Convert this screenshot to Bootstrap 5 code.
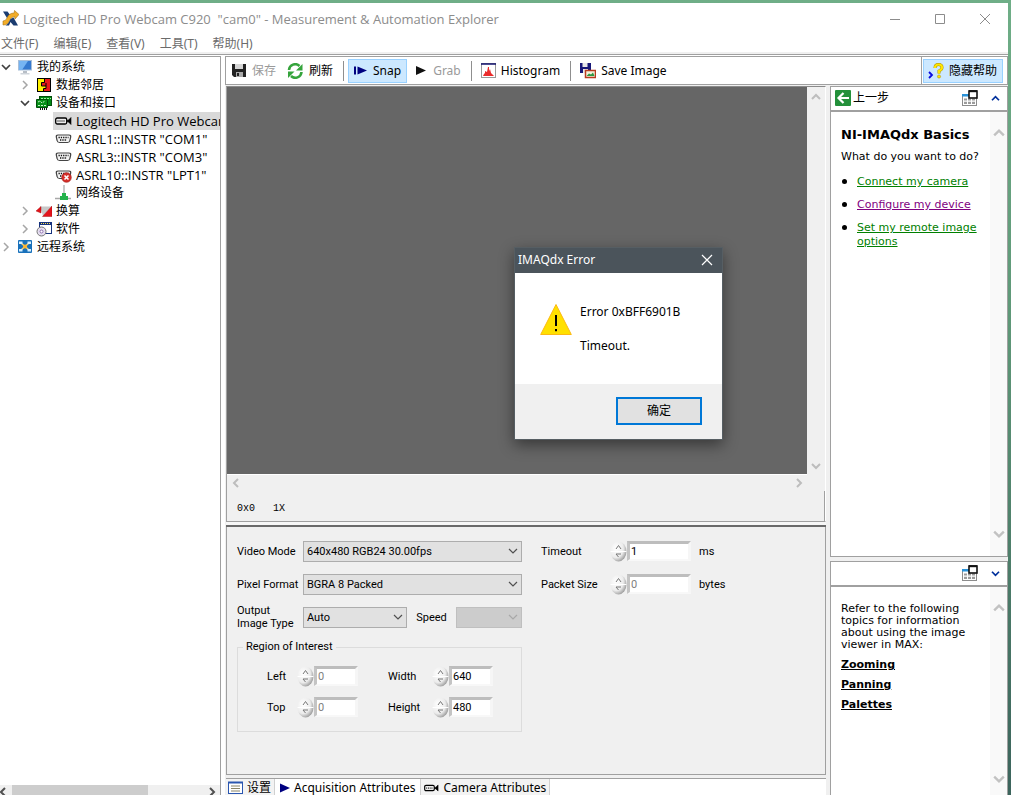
<!DOCTYPE html>
<html lang="zh-CN">
<head>
<meta charset="utf-8">
<meta name="viewport" content="width=device-width, initial-scale=1">
<title>Measurement &amp; Automation Explorer</title>
<link href="https://cdn.jsdelivr.net/npm/bootstrap@5.3.0/dist/css/bootstrap.min.css" rel="stylesheet">
<style>
:root { --line: #a0a0a0; --face: #f0f0f0; }
body { font: 12px/18px "Noto Sans", "Noto Sans CJK SC", sans-serif; color: #000; background: linear-gradient(#6fae87, #5f9878 40%, #3c645c); overflow: hidden; padding: 3px 3px 0 0; }
svg { display: block; flex: none; }
button { font: inherit; color: inherit; }
.app-window { background: var(--face); height: 100%; }
.title-bar { height: 31px; color: #8c8c8c; background: #fff; padding: 0 17px 0 2px; }
.title-text { font-family: "Open Sans", sans-serif; font-size: 13px; white-space: pre; }
.win-btn { background: none; border: 0; padding: 0; width: 12px; }
.menu-bar { height: 18px; background: #fff; gap: 15px; padding: 1px 0 0 1px; }
.menu-bar a { color: #6b6b6b; text-decoration: none; line-height: 17px; }
.menu-rule { height: 3px; border-bottom: 1px solid var(--line); }
.main-area { background: #fff; border-top: 1px solid #fff; }
.tree-pane { width: 221px; border-top: 1px solid var(--line); border-right: 1px solid var(--line); background: #fff; padding-top: 1px; }
.tree-row { height: 18px; gap: 4px; white-space: nowrap; overflow: hidden; }
.tree-row .twist { width: 12px; margin-right: 1px; }
.lvl-1 { padding-left: 19px; }
.lvl-2 { margin-left: 53px; padding-left: 2px; }
.latin { font-family: "Open Sans", sans-serif; font-size: 13px; }
.is-current { background: #d9d9d9; }
.scroll-x { height: 10px; background: var(--face); overflow: hidden; }
.thumb { width: 136px; background: #cdcdcd; }
.work-pane { background: var(--face); margin-left: 4px; border-top: 1px solid var(--line); }
.tools { height: 28px; background: #fff; border: 1px solid var(--line); border-top: 0; font-size: 12px; }
.tool { background: none; border: 1px solid transparent; height: 24px; display: flex; align-items: center; gap: 5px; padding: 0 5px 0 4px; white-space: nowrap; }
.tool.is-on { background: #cce8ff; border-color: #99d1ff; }
.tool:disabled { color: #9a9a9a; }
.tool-sep { width: 1px; height: 20px; background: #8f8f8f; }
.tools-end { border-left: 1px solid var(--line); padding: 0 4px 0 1px; }
.center-pane { padding: 1px 0 0 1px; }
.viewer { border: 1px solid var(--line); border-top-color: #8b8b8b; border-right-color: #fff; position: relative; }
.image-canvas { background: #666; border-bottom: 1px solid #fff; }
.scroll-y { width: 18px; padding: 6px 0 5px; background: var(--face); }
.image-scroll { height: 16px; padding: 0 22px 0 5px; }
.status-row { font-family: "Liberation Mono", monospace; font-size: 10px; height: 30px; padding: 6px 0 0 10px; gap: 18px; border-right: 1px solid var(--line); }
.splitter { height: 5px; background: #f7f7f7; border-bottom: 2px solid #6a6a6a; }
.settings { font: 11px/13px Roboto, sans-serif; min-height: 248px; border: 1px solid var(--line); border-top: 0; padding: 13px 11px 0 10px; }
.form-cols { gap: 19px; }
.col-left { width: 285px; }
.line-row { display: flex; align-items: center; height: 22px; white-space: nowrap; }
.field-name { width: 66px; flex: none; }
.side-name { width: 69px; }
.combo { --bs-form-select-bg-img: url("data:image/svg+xml,%3csvg xmlns='http://www.w3.org/2000/svg' viewBox='0 0 10 10'%3e%3cpath d='M1 3l4 4 4-4' fill='none' stroke='%23505050' stroke-width='1.2'/%3e%3c/svg%3e"); font: inherit; color: #000; background-color: #e1e1e1; border: 1px solid #adadad; border-radius: 0; height: 21px; padding: 0 18px 0 3px; background-position: right 3px center; background-size: 10px 10px; }
.combo:disabled { --bs-form-select-bg-img: url("data:image/svg+xml,%3csvg xmlns='http://www.w3.org/2000/svg' viewBox='0 0 10 10'%3e%3cpath d='M1 3l4 4 4-4' fill='none' stroke='%23a8a8a8' stroke-width='1.2'/%3e%3c/svg%3e"); background-color: #ccc; border-color: #bfbfbf; opacity: 1; }
.combo-auto { width: 104px; }
.combo-speed { width: 66px; }
.num { width: 44px; height: 20px; font: inherit; border-style: solid; border-width: 3px 3px 2px 3px; border-color: #bdbdbd #f6f6f6 #f8f8f8 #c4c4c4; background: #fff; padding: 0 0 0 1px; border-radius: 0; outline: 0; color: #000; }
.num:disabled { color: #808080; background: #fff; }
.num-wide { width: 64px; }
.roi { border: 1px solid #dcdcdc; padding: 0 29px 13px; margin-top: 12px; }
.roi legend { font: inherit; width: auto; float: none; margin: 0 0 12px -24px; padding: 0 3px; line-height: 14px; }
.roi-grid { display: grid; grid-template-columns: 30px 91px 44px auto; row-gap: 10px; align-items: center; }
.tab-strip { height: 17px; background: #fff; border-top: 1px solid var(--line); margin-top: 3px; }
.tab-strip button { background: none; border: 0; border-right: 1px solid #d0d0d0; padding: 2px 3px 0 2px; height: 16px; line-height: 14px; display: flex; align-items: center; gap: 3px; white-space: nowrap; }
.tab-strip .tab-on { background: #fff; padding-right: 5px; }
.tab-strip .tab-off { background: #f3f3f3; }
.help-pane { width: 178px; margin: 1px 0 0 4px; gap: 4px; }
.help-box { border: 1px solid var(--line); background: #fff; }
.help-main { height: 471px; }
.help-head { height: 25px; border-bottom: 2px solid var(--line); padding: 0 7px 1px 4px; gap: 13px; }
.help-head button { background: none; border: 0; padding: 0; display: flex; align-items: center; gap: 2px; }
.help-head .fold { color: #00309c; }
.help-text { font: 11px/12px "DejaVu Sans", sans-serif; padding: 0 0 0 10px; }
.help-text h1 { font-size: 13px; font-weight: 700; line-height: 16px; margin: 15px 0 8px; white-space: nowrap; }
.help-text p { margin: 0; white-space: nowrap; }
.help-text ul { list-style: none; padding: 0; margin: 12px 0 0; }
.help-text li { position: relative; padding-left: 16px; line-height: 14px; margin-bottom: 9px; white-space: nowrap; }
.help-text li::before { content: ""; position: absolute; left: 1px; top: 4px; width: 5px; height: 5px; border-radius: 50%; background: #000; }
.help-text li a { color: #008000; }
.help-text li a.seen { color: #800080; }
.topic { color: #000; font-weight: 700; display: block; margin-bottom: 8px; }
.lane { width: 17px; background: #f9f9f9; padding: 16px 0 17px; color: #c2c2c2; }
.lane-low { padding-bottom: 11px; }
.faint { color: #bdbdbd; }
.error-box { position: absolute; left: 287px; top: 160px; width: 209px; border: 1px solid #565e63; background: #fff; box-shadow: 0 5px 14px rgba(0,0,0,.45); font-size: 12px; }
.error-title { height: 25px; background: #4b545b; color: #fff; padding: 0 9px 2px 3px; }
.error-body { height: 111px; padding: 30px 0 0 25px; gap: 8px; line-height: 17px; }
.error-foot { height: 55px; background: var(--face); padding: 0 20px 2px; }
.ok-btn { width: 86px; height: 28px; border: 2px solid #0078d7; background: #e1e1e1; padding: 0; }
</style>
</head>
<body class="vh-100">
<svg class="position-absolute" width="0" height="0" aria-hidden="true">
  <defs><radialGradient id="knob" cx=".35" cy=".35" r=".75"><stop offset="0" stop-color="#fff"/><stop offset=".6" stop-color="#ececec"/><stop offset="1" stop-color="#8c8c8c"/></radialGradient></defs>
  <symbol id="open" viewBox="0 0 12 12"><path d="M2 4l4 4 4-4" fill="none" stroke="#404040" stroke-width="1.7"/></symbol>
  <symbol id="closed" viewBox="0 0 12 12"><path d="M4 2l4 4-4 4" fill="none" stroke="#a6a6a6" stroke-width="1.500"/></symbol>
  <symbol id="up" viewBox="0 0 10 8"><path d="M1 6l4-4 4 4" fill="none" stroke="currentColor" stroke-width="2"/></symbol>
  <symbol id="down" viewBox="0 0 10 8"><path d="M1 2l4 4 4-4" fill="none" stroke="currentColor" stroke-width="2"/></symbol>
  <symbol id="left" viewBox="0 0 8 10"><path d="M6 1L2 5l4 4" fill="none" stroke="currentColor" stroke-width="2"/></symbol>
  <symbol id="right" viewBox="0 0 8 10"><path d="M2 1l4 4-4 4" fill="none" stroke="currentColor" stroke-width="2"/></symbol>
  <symbol id="camera" viewBox="0 0 17 16"><rect x=".7" y="5" width="11" height="6" rx="1.500" fill="#ececec" stroke="#000" stroke-width="1.300"/><path d="M2.500 8h7" stroke="#555" stroke-width="2" stroke-dasharray="1 1"/><path d="M12 7.500l1.500-.5 2.500-2.500v7L13.500 9 12 8.500z" fill="#000" stroke="#000" stroke-width=".6"/></symbol>
  <symbol id="serial" viewBox="0 0 16 16"><path d="M2.500 4h11q2 0 1.700 2l-.8 3.500q-.4 2-2.400 2H4q-2 0-2.400-2L.8 6q-.3-2 1.700-2z" fill="#f4f4f4" stroke="#444" stroke-width="1.200"/><path d="M3 6.500h10M4.500 9h7" stroke="#111" stroke-width="1.600" stroke-dasharray="1.300 1"/></symbol>
  <symbol id="winpair" viewBox="0 0 17 17"><rect x="1.500" y="4.500" width="14" height="11" fill="#fff" stroke="#8c8c8c"/><rect x="1" y="4" width="15" height="2.500" fill="#2a92d8"/><path d="M3 9.500h11M3 12.800h11" stroke="#9b9b9b" stroke-width="2.200" stroke-dasharray="3 1"/><rect x="8" y="1" width="8" height="7" fill="#fff" stroke="#111" stroke-width="1.600"/><path d="M8 1.200h8" stroke="#111" stroke-width="2"/></symbol>
  <symbol id="spin" viewBox="0 0 17 21"><ellipse cx="8.500" cy="10.500" rx="8" ry="10" fill="url(#knob)"/><path d="M.5 10.500h16" stroke="#fff"/><path d="M6 8l2.500-3.500L11 8" fill="none" stroke="#777"/><path d="M11 13H6l2.500 3" fill="none" stroke="#777"/></symbol>
</svg>

<div class="app-window d-flex flex-column">
  <header>
    <div class="title-bar d-flex align-items-center">
      <svg width="17" height="17" viewBox="0 0 17 17"><path d="M1 1.500h4.500l3 4L5 8z" fill="#1b3c70"/><path d="M1 15q5 0 6.500-4.500Q9 7 12.500 6.500l.5 2.500L17 4.500 12.500.5l-.3 2.500Q7 3 5 8q-1 3-4 3z" fill="#f2ad28" stroke="#a87410" stroke-width=".6"/><path d="M8.500 9l3-1.500 4.500 8h-4.500l-3-3.500-1.500 3.500H3.500q3-1.500 5-6.500z" fill="#1b3c70"/></svg>
      <span class="title-text ms-1 flex-grow-1">Logitech HD Pro Webcam C920  "cam0" - Measurement &amp; Automation Explorer</span>
      <div class="d-flex align-items-center" style="gap:33px">
        <button class="win-btn" aria-label="最小化"><svg width="12" height="12"><path d="M1 6.500h10" stroke="#8c8c8c"/></svg></button>
        <button class="win-btn" aria-label="最大化"><svg width="12" height="12"><path d="M1.500 1.500h9v9h-9z" fill="none" stroke="#8c8c8c"/></svg></button>
        <button class="win-btn" aria-label="关闭"><svg width="12" height="12"><path d="M1 1l10 10M11 1L1 11" stroke="#8c8c8c"/></svg></button>
      </div>
    </div>
    <nav class="menu-bar d-flex align-items-center">
      <a href="#">文件(F)</a><a href="#">编辑(E)</a><a href="#">查看(V)</a><a href="#">工具(T)</a><a href="#">帮助(H)</a>
    </nav>
    <div class="menu-rule"></div>
  </header>

  <main class="main-area d-flex flex-grow-1 overflow-hidden">
    <aside class="tree-pane d-flex flex-column flex-shrink-0">
      <ul class="list-unstyled m-0 flex-grow-1">
        <li class="tree-row d-flex align-items-center"><svg class="twist" width="12" height="12"><use href="#open"/></svg><svg width="16" height="16"><rect x="1.500" y="1.500" width="13" height="9.500" fill="#3579cf" stroke="#a9bfd8"/><path d="M2 2h9L5 11H2z" fill="#76b4f2"/><path d="M6 12h4v2H6z" fill="#b7bec6"/><path d="M3.500 14h9v1.500h-9z" fill="#cfd4da"/></svg>我的系统</li>
        <li class="tree-row lvl-1 d-flex align-items-center"><svg class="twist" width="12" height="12"><use href="#closed"/></svg><svg width="16" height="16"><rect x="1.500" y="1.500" width="13" height="13" fill="#e8191c" stroke="#000"/><path d="M2 2h6v3H5.500v4H10v2H8v3H2z" fill="#fff200"/><path d="M8.500 2v3.500h-3V9H10V6M10 9v2.500H7.500V14" fill="none" stroke="#000"/></svg>数据邻居</li>
        <li class="tree-row lvl-1 d-flex align-items-center"><svg class="twist" width="12" height="12"><use href="#open"/></svg><svg width="16" height="16"><rect x="3.500" y="1.500" width="12" height="9" fill="#008a14" stroke="#004d0a"/><path d="M5 3.500h10" stroke="#9cf0a2" stroke-dasharray="2 1"/><path d="M.5 4.500h11v8H.5z" fill="#079018" stroke="#004d0a"/><path d="M2 7l2-1 2 2 3-2M2 10.500h8" fill="none" stroke="#c6f4c9" stroke-dasharray="2 1"/><path d="M4 14h8" stroke="#111" stroke-width="2" stroke-dasharray="1 1"/></svg>设备和接口</li>
        <li class="tree-row lvl-2 is-current d-flex align-items-center"><svg width="17" height="16"><use href="#camera"/></svg><span class="latin">Logitech HD Pro Webcam</span></li>
        <li class="tree-row lvl-2 d-flex align-items-center"><svg width="17" height="16"><use href="#serial"/></svg><span class="latin">ASRL1::INSTR "COM1"</span></li>
        <li class="tree-row lvl-2 d-flex align-items-center"><svg width="17" height="16"><use href="#serial"/></svg><span class="latin">ASRL3::INSTR "COM3"</span></li>
        <li class="tree-row lvl-2 d-flex align-items-center"><svg width="17" height="16"><use href="#serial"/><circle cx="11.500" cy="10.500" r="4.800" fill="#d6302b" stroke="#9d1916" stroke-width=".6"/><path d="M9.500 8.500l4 4m0-4l-4 4" stroke="#fff" stroke-width="1.600"/></svg><span class="latin">ASRL10::INSTR "LPT1"</span></li>
        <li class="tree-row lvl-2 d-flex align-items-center"><svg width="17" height="16"><path d="M8 0h2v9H8z" fill="#c8c8c8"/><path d="M7 8h4v3h2v4H5v-4h2z" fill="#24b24b"/><path d="M0 13.500h5M13 13.500h3" stroke="#a8a8a8" stroke-width="1.600"/></svg>网络设备</li>
        <li class="tree-row lvl-1 d-flex align-items-center"><svg class="twist" width="12" height="12"><use href="#closed"/></svg><svg width="16" height="16"><path d="M4 3.500h12L7 13z" fill="#c8c8c8"/><path d="M16 3v10.500H6.500z" fill="#e4131b" stroke="#900" stroke-width=".4"/><path d="M0 8l5-4.500V10z" fill="#e4131b" stroke="#900" stroke-width=".4"/></svg>换算</li>
        <li class="tree-row lvl-1 d-flex align-items-center"><svg class="twist" width="12" height="12"><use href="#closed"/></svg><svg width="16" height="16"><rect x="3.500" y="1.500" width="12" height="11" fill="#fff" stroke="#16327e"/><path d="M3 2.500h13" stroke="#16327e" stroke-width="3"/><path d="M5 2.500h9" stroke="#ffe34d" stroke-dasharray="1 1"/><circle cx="5.500" cy="10.500" r="4.500" fill="#e5def0" stroke="#777"/><circle cx="5.500" cy="10.500" r="1.500" fill="#fff" stroke="#9070b0"/></svg>软件</li>
        <li class="tree-row d-flex align-items-center"><svg class="twist" width="12" height="12"><use href="#closed"/></svg><svg width="16" height="16"><rect x="1" y="1" width="14" height="13" rx="1" fill="#1971bb"/><path d="M4 4l8 7M4 11l8-7" stroke="#ffd06a" stroke-width="1.500"/><path d="M2 2.500h3.500V5H2zM10.500 2.500H14V5h-3.500zM2 10h3.500v2.500H2zM10.500 10H14v2.500h-3.500z" fill="#d5efff"/><circle cx="8" cy="7.500" r="2" fill="#ffb52b"/></svg>远程系统</li>
      </ul>
      <div class="scroll-x d-flex">
        <svg width="12" height="14" viewBox="0 0 12 14"><path d="M5 3L1 7l4 4" fill="none" stroke="#505050" stroke-width="2"/></svg>
        <div class="thumb"></div>
        <svg class="ms-auto me-1" width="8" height="14" viewBox="0 0 8 14"><path d="M2 3l4 4-4 4" fill="none" stroke="#505050" stroke-width="2"/></svg>
      </div>
    </aside>

    <section class="work-pane d-flex flex-column flex-grow-1 overflow-hidden">
      <div class="tools d-flex align-items-center flex-shrink-0">
        <button class="tool" disabled><svg width="16" height="16"><path d="M1 1h14v13H3l-2-2z" fill="#222"/><path d="M4 1h8v5H4z" fill="#d5d5d5"/><path d="M5 9h7v5H5z" fill="#aaa"/><path d="M6 10h2v3H6z" fill="#222"/></svg>保存</button>
        <button class="tool"><svg width="17" height="16"><path d="M2 7a6.200 6.200 0 0110.500-4" fill="none" stroke="#35a43c" stroke-width="2.600"/><path d="M15.500 1v6.500H9z" fill="#35a43c"/><path d="M14.500 9A6.200 6.200 0 014 13" fill="none" stroke="#35a43c" stroke-width="2.600"/><path d="M1 15V8.500h6.500z" fill="#35a43c"/></svg>刷新</button>
        <span class="tool-sep mx-1"></span>
        <button class="tool is-on"><svg width="15" height="14"><path d="M2 2.500v8" stroke="#000080" stroke-width="2"/><path d="M4.500 2.500L14 6.500l-9.500 4z" fill="#000080"/></svg>Snap</button>
        <button class="tool ms-1" disabled><svg width="12" height="12"><path d="M0 1l10 4.500L0 10z" fill="#111"/></svg>Grab</button>
        <span class="tool-sep mx-1"></span>
        <button class="tool"><svg width="15" height="16"><rect x=".5" y=".5" width="14" height="14" fill="#fff" stroke="#999"/><path d="M0 1h15" stroke="#12126e" stroke-width="1.500"/><path d="M2 13l1-2 1-1V8l2 1 1-5h1v4l1-2 1 4 2 2 1 1z" fill="#ea2b2b"/></svg>Histogram</button>
        <span class="tool-sep mx-1"></span>
        <button class="tool"><svg width="16" height="16"><path d="M0 0h11v10H0z" fill="#181878"/><path d="M2.500 0h5v4h-5zM3 6h5v4H3z" fill="#e8e8e8"/><rect x="5.500" y="7.500" width="10" height="7" fill="#f5f0dc" stroke="#b83b1e" stroke-width="1.500"/><path d="M6.500 13l2.500-2.500 2 1 2-2 1.500 3.500z" fill="#2c9841"/></svg>Save Image</button>
        <div class="tools-end ms-auto align-self-stretch d-flex align-items-center">
          <button class="tool is-on"><svg width="16" height="16"><path d="M1 9l3 3-3 3" fill="none" stroke="#0a0ae0" stroke-width="1.800"/><path d="M7 5Q7 1.500 10.500 1.500T14 4.500Q14 6.500 11 8v2.500" fill="none" stroke="#a98b00" stroke-width="3"/><path d="M7 5Q7 1.500 10.500 1.500T14 4.500Q14 6.500 11 8v2.500" fill="none" stroke="#ffe600" stroke-width="2.200"/><circle cx="11" cy="13.500" r="1.600" fill="#ffe600" stroke="#a98b00" stroke-width=".5"/></svg>隐藏帮助</button>
        </div>
      </div>

      <div class="d-flex flex-grow-1 overflow-hidden">
        <div class="center-pane d-flex flex-column flex-grow-1">
          <div class="viewer d-flex flex-column flex-grow-1">
            <div class="d-flex flex-grow-1">
              <div class="image-canvas flex-grow-1"></div>
              <div class="scroll-y faint d-flex flex-column justify-content-between align-items-center"><svg width="10" height="8"><use href="#up"/></svg><svg width="10" height="8"><use href="#down"/></svg></div>
            </div>
            <div class="image-scroll faint d-flex justify-content-between align-items-center"><svg width="8" height="10"><use href="#left"/></svg><svg width="8" height="10"><use href="#right"/></svg></div>
            <div class="status-row d-flex align-items-center"><span>0x0</span><span>1X</span></div>

            <div class="error-box" role="dialog" aria-labelledby="err-title">
              <div class="error-title d-flex align-items-center justify-content-between"><span id="err-title">IMAQdx Error</span><button class="win-btn" aria-label="关闭"><svg width="12" height="12"><path d="M1 1l10 10M11 1L1 11" stroke="#fff" stroke-width="1.200"/></svg></button></div>
              <div class="error-body d-flex">
                <svg width="32" height="33"><path d="M16 1.500L31.300 31.500H.7z" fill="#ffe000" stroke="#fcb913"/><path d="M16 12v11M16 26v2.200" stroke="#000" stroke-width="2"/></svg>
                <div>Error 0xBFF6901B<br><br>Timeout.</div>
              </div>
              <div class="error-foot d-flex align-items-center justify-content-end"><button class="ok-btn">确定</button></div>
            </div>
          </div>
          <div class="splitter"></div>

          <form class="settings">
            <div class="form-cols d-flex">
              <div class="col-left">
                <div class="d-flex flex-column" style="gap:11px">
                  <div class="line-row"><label class="field-name" for="mode">Video Mode</label><select id="mode" class="form-select combo flex-fill"><option>640x480 RGB24 30.00fps</option></select></div>
                  <div class="line-row"><label class="field-name" for="pix">Pixel Format</label><select id="pix" class="form-select combo flex-fill"><option>BGRA 8 Packed</option></select></div>
                  <div class="line-row"><label class="field-name" for="outtype">Output<br>Image Type</label><select id="outtype" class="form-select combo combo-auto"><option>Auto</option></select><label class="mx-auto" for="speed">Speed</label><select id="speed" class="form-select combo combo-speed" disabled><option></option></select></div>
                </div>
                <fieldset class="roi">
                  <legend>Region of Interest</legend>
                  <div class="roi-grid">
                    <label for="rl">Left</label><div class="d-flex"><svg width="17" height="21"><use href="#spin"/></svg><input id="rl" class="num" value="0" disabled></div>
                    <label for="rw">Width</label><div class="d-flex"><svg width="17" height="21"><use href="#spin"/></svg><input id="rw" class="num" value="640"></div>
                    <label for="rt">Top</label><div class="d-flex"><svg width="17" height="21"><use href="#spin"/></svg><input id="rt" class="num" value="0" disabled></div>
                    <label for="rh">Height</label><div class="d-flex"><svg width="17" height="21"><use href="#spin"/></svg><input id="rh" class="num" value="480"></div>
                  </div>
                </fieldset>
              </div>
              <div class="d-flex flex-column" style="gap:11px">
                <div class="line-row"><label class="side-name" for="to">Timeout</label><svg width="17" height="21"><use href="#spin"/></svg><input id="to" class="num num-wide" value="1"><span class="ms-2">ms</span></div>
                <div class="line-row"><label class="side-name" for="ps">Packet Size</label><svg width="17" height="21"><use href="#spin"/></svg><input id="ps" class="num num-wide" value="0" disabled><span class="ms-2">bytes</span></div>
              </div>
            </div>
          </form>
          <div class="tab-strip d-flex">
            <button class="tab-off"><svg width="16" height="14"><rect x=".5" y="1.500" width="14" height="11" fill="#fff" stroke="#2a56b0"/><path d="M0 1.500h15" stroke="#2a56b0" stroke-width="2"/><path d="M3 5h9M3 7.500h9M3 10h9" stroke="#8a8468"/></svg>设置</button>
            <button class="tab-on"><svg width="14" height="14"><path d="M3 2.500l10 4.500-10 4.500z" fill="#000080"/></svg>Acquisition Attributes</button>
            <button class="tab-off"><svg width="17" height="14"><use href="#camera"/></svg>Camera Attributes</button>
          </div>
        </div>

        <aside class="help-pane d-flex flex-column flex-shrink-0">
          <section class="help-box help-main d-flex flex-column">
            <div class="help-head d-flex align-items-center"><button><svg width="16" height="16"><rect width="16" height="16" rx="1" fill="#23903a"/><path d="M8.500 3L3.500 8l5 5M4 8h10" fill="none" stroke="#fff" stroke-width="2.200"/></svg>上一步</button><button class="ms-auto" aria-label="窗口"><svg width="17" height="17"><use href="#winpair"/></svg></button><button class="fold" aria-label="收起"><svg width="9" height="7"><use href="#up"/></svg></button></div>
            <div class="d-flex flex-grow-1">
              <div class="help-text flex-grow-1">
                <h1>NI-IMAQdx Basics</h1>
                <p>What do you want to do?</p>
                <ul><li><a href="#">Connect my camera</a></li><li><a class="seen" href="#">Configure my device</a></li><li><a href="#">Set my remote image<br>options</a></li></ul>
              </div>
              <div class="lane d-flex flex-column justify-content-between align-items-center"><svg width="12" height="10"><use href="#up"/></svg><svg width="12" height="10"><use href="#down"/></svg></div>
            </div>
          </section>
          <section class="help-box d-flex flex-column flex-grow-1 border-bottom-0">
            <div class="help-head d-flex align-items-center"><button class="ms-auto" aria-label="窗口"><svg width="17" height="17"><use href="#winpair"/></svg></button><button class="fold" aria-label="展开"><svg width="9" height="7"><use href="#down"/></svg></button></div>
            <div class="d-flex flex-grow-1">
              <div class="help-text flex-grow-1">
                <p class="mt-3 mb-2">Refer to the following<br>topics for information<br>about using the image<br>viewer in MAX:</p>
                <a class="topic" href="#">Zooming</a><a class="topic" href="#">Panning</a><a class="topic" href="#">Palettes</a>
              </div>
              <div class="lane lane-low d-flex flex-column justify-content-between align-items-center"><svg width="12" height="10"><use href="#up"/></svg><svg width="12" height="10"><use href="#down"/></svg></div>
            </div>
          </section>
        </aside>
      </div>
    </section>
  </main>
</div>
<script src="https://cdn.jsdelivr.net/npm/bootstrap@5.3.0/dist/js/bootstrap.bundle.min.js"></script>
</body>
</html>
